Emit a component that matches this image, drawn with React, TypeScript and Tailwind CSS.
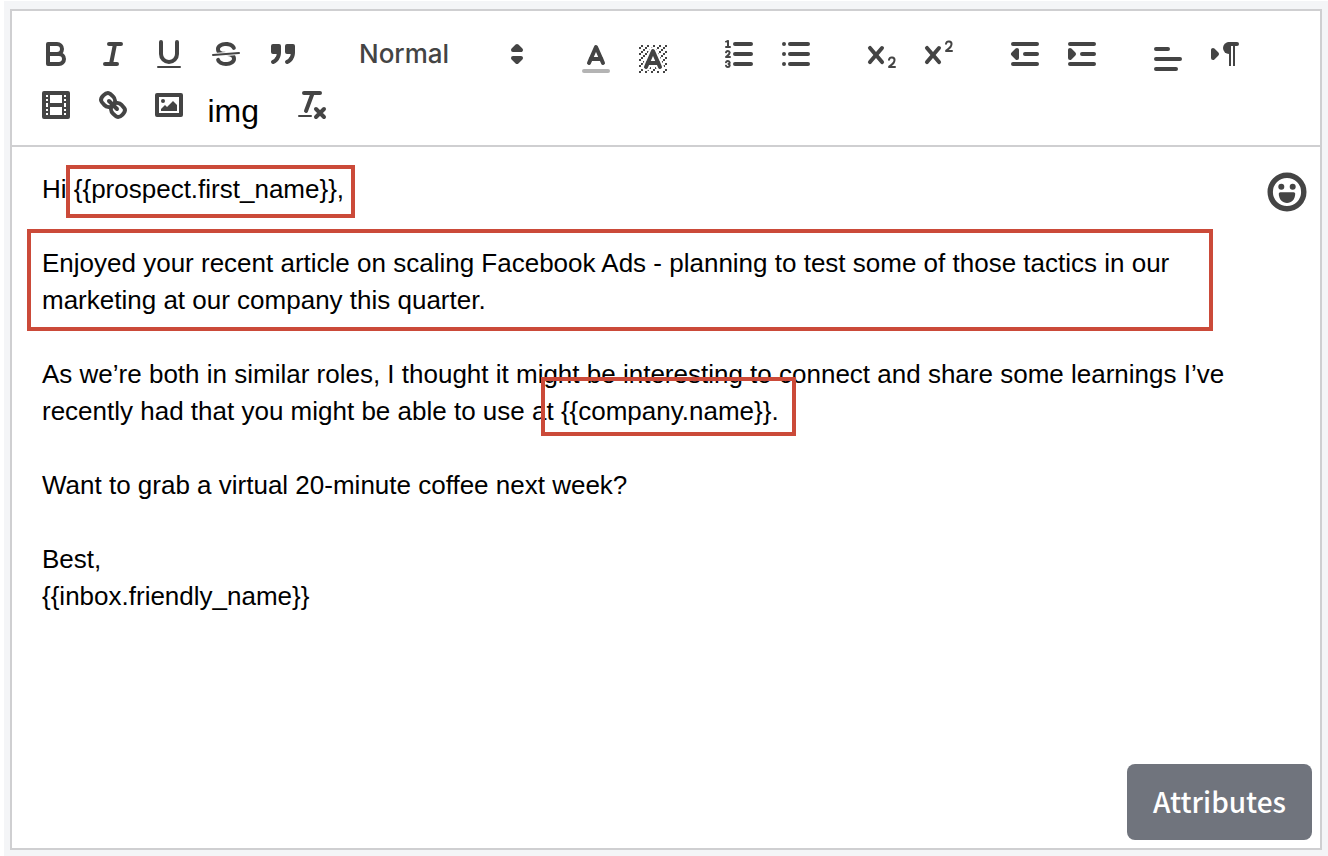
import type { ReactNode } from "react";

function Icon({ children }: { children: ReactNode }) {
  return (
    <svg
      viewBox="0 0 18 18"
      className="size-9 shrink-0"
      fill="none"
      stroke="#444"
      strokeWidth="2"
      strokeLinecap="round"
      strokeLinejoin="round"
      aria-hidden="true"
    >
      {children}
    </svg>
  );
}

function ToolButton({ label, low, children }: { label: string; low?: boolean; children: ReactNode }) {
  return (
    <button
      type="button"
      aria-label={label}
      className={low ? "flex h-9 items-center justify-center pt-[10px]" : "flex h-9 items-center justify-center"}
    >
      <Icon>{children}</Icon>
    </button>
  );
}

function Pair({ children }: { children: ReactNode }) {
  return <div className="grid w-[113px] grid-cols-2">{children}</div>;
}

const fill = { fill: "#444", stroke: "none" };

const hatchCells = [
  [4, 4], [2, 6], [3, 5], [4, 7], [2, 12], [2, 9], [2, 15], [3, 8], [12, 2], [11, 3], [2, 3], [6, 2], [3, 2],
  [5, 3], [9, 2], [15, 14], [13, 7], [15, 5], [14, 6], [15, 8], [14, 9], [14, 3], [15, 2], [12, 5], [13, 4],
  [9, 14], [8, 15], [5, 15], [11, 15], [14, 15], [15, 11],
];

const crossPath =
  "M9.65,5.241a1,1,0,0,0-1.409.108L6,7.964,3.759,5.349A1,1,0,0,0,2.192,6.59178Q2.21541,6.6213,2.241,6.649L4.684,9.5,2.241,12.35A1,1,0,0,0,3.71,13.70722q0.02557-.02768.049-0.05722L6,11.036,8.241,13.65a1,1,0,1,0,1.567-1.24277Q9.78459,12.3777,9.759,12.35L7.316,9.5,9.759,6.651A1,1,0,0,0,9.65,5.241Z";

function Toolbar() {
  return (
    <div
      role="toolbar"
      aria-label="Formatting"
      className="flex flex-wrap gap-x-[30px] gap-y-[15px] border-b-2 border-[#cfcfd1] px-4 pt-[25px] pb-[22px]"
    >
      <div className="grid w-[283px] grid-cols-5">
        <ToolButton label="Bold">
          <path d="M5,4H9.5A2.5,2.5,0,0,1,12,6.5v0A2.5,2.5,0,0,1,9.5,9H5V4Z" />
          <path d="M5,9h5.5A2.5,2.5,0,0,1,13,11.5v0A2.5,2.5,0,0,1,10.5,14H5V9Z" />
        </ToolButton>
        <ToolButton label="Italic">
          <path d="M7,4H13M5,14H11M8,14L10,4" />
        </ToolButton>
        <ToolButton label="Underline">
          <path d="M5,3V9a4.012,4.012,0,0,0,4,4H9a4.012,4.012,0,0,0,4-4V3" />
          <rect {...fill} height="1" rx="0.5" width="12" x="3" y="15" />
        </ToolButton>
        <ToolButton label="Strikethrough">
          <line strokeWidth="1" x1="15.5" x2="2.5" y1="8.5" y2="9.5" />
          <path
            {...fill}
            d="M9.007,8C6.542,7.791,6,7.519,6,6.5,6,5.792,7.283,5,9,5c1.571,0,2.765.679,2.969,1.309a1,1,0,0,0,1.9-.617C13.356,4.106,11.354,3,9,3,6.2,3,4,4.538,4,6.5a3.2,3.2,0,0,0,.5,1.843Z"
          />
          <path
            {...fill}
            d="M8.984,10C11.457,10.208,12,10.479,12,11.5c0,0.708-1.283,1.5-3,1.5-1.571,0-2.765-.679-2.969-1.309a1,1,0,1,0-1.9.617C4.644,13.894,6.646,15,9,15c2.8,0,5-1.538,5-3.5a3.2,3.2,0,0,0-.5-1.843Z"
          />
        </ToolButton>
        <ToolButton label="Blockquote">
          <rect fill="#444" height="3" width="3" x="4" y="5" />
          <rect fill="#444" height="3" width="3" x="11" y="5" />
          <path fill="#444" d="M7,8c0,4.031-3,5-3,5" />
          <path fill="#444" d="M14,8c0,4.031-3,5-3,5" />
        </ToolButton>
      </div>

      <div className="grid w-[197px] items-center">
        <select
          aria-label="Heading"
          className="col-start-1 row-start-1 h-9 w-full appearance-none pl-[18px] font-['Inter',sans-serif] text-[26px] leading-9 font-medium text-[#444]"
        >
          <option>Normal</option>
        </select>
        <div className="pointer-events-none col-start-1 row-start-1 flex justify-end pr-[3px]">
          <Icon>
            <polygon fill="#444" points="7 11 9 13 11 11 7 11" />
            <polygon fill="#444" points="7 7 9 5 11 7 7 7" />
          </Icon>
        </div>
      </div>

      <Pair>
        <ToolButton label="Text color" low>
          <line opacity="0.4" x1="3" x2="15" y1="15" y2="15" />
          <polyline points="5.5 11 9 3 12.5 11" />
          <line x1="11.63" x2="6.38" y1="9" y2="9" />
        </ToolButton>
        <ToolButton label="Background color" low>
          <g {...fill}>
            {hatchCells.map(([x, y]) => (
              <rect key={`${x}-${y}`} height="1" width="1" x={x} y={y} />
            ))}
            <polygon points="6 6.868 6 6 5 6 5 7 5.942 7 6 6.868" />
            <polygon points="6.817 5 6 5 6 6 6.38 6 6.817 5" />
            <polygon points="4 11.439 4 11 3 11 3 12 3.755 12 4 11.439" />
            <polygon points="4.63 10 4 10 4 11 4.192 11 4.63 10" />
            <path d="M10.832,4.2L11,4.582V4H10.708A1.948,1.948,0,0,1,10.832,4.2Z" />
            <path d="M7,4.582L7.168,4.2A1.929,1.929,0,0,1,7.292,4H7V4.582Z" />
            <path d="M8,13H7.683l-0.351.8a1.933,1.933,0,0,1-.124.2H8V13Z" />
            <path d="M9,3H8V3.282A1.985,1.985,0,0,1,9,3Z" />
            <polygon points="13.447 10.174 13.469 10.225 13.472 10.232 13.808 11 14 11 14 10 13.37 10 13.447 10.174" />
            <path d="M3.775,14H3v1H4V14.314A1.97,1.97,0,0,1,3.775,14Z" />
            <polygon points="12 6.868 12 6 11.62 6 12 6.868" />
            <polygon points="12.933 9 13 9 13 8 12.495 8 12.933 9" />
            <path d="M6,14.926V15H7V14.316A1.993,1.993,0,0,1,6,14.926Z" />
            <path d="M10.668,13.8L10.317,13H10v1h0.792A1.947,1.947,0,0,1,10.668,13.8Z" />
            <path d="M14.332,12.2a1.99,1.99,0,0,1,.166.8H15V12H14.245Z" />
          </g>
          <polyline points="5.5 13 9 5 12.5 13" />
          <line x1="11.63" x2="6.38" y1="11" y2="11" />
        </ToolButton>
      </Pair>

      <Pair>
        <ToolButton label="Numbered list">
          <path d="M7,4H15M7,9H15M7,14H15" />
          <line strokeWidth="1" x1="2.5" x2="4.5" y1="5.5" y2="5.5" />
          <path
            {...fill}
            d="M3.5,6A0.5,0.5,0,0,1,3,5.5V3.085l-0.276.138A0.5,0.5,0,0,1,2.053,3c-0.124-.247-0.023-0.324.224-0.447l1-.5A0.5,0.5,0,0,1,4,2.5v3A0.5,0.5,0,0,1,3.5,6Z"
          />
          <path strokeWidth="1" d="M4.5,10.5h-2c0-.234,1.85-1.076,1.85-2.234A0.959,0.959,0,0,0,2.5,8.156" />
          <path
            strokeWidth="1"
            d="M2.5,14.846a0.959,0.959,0,0,0,1.85-.109A0.7,0.7,0,0,0,3.75,14a0.688,0.688,0,0,0,.6-0.736,0.959,0.959,0,0,0-1.85-.109"
          />
        </ToolButton>
        <ToolButton label="Bulleted list">
          <path d="M6,4H15M6,9H15M6,14H15M3,4H3M3,9H3M3,14H3" />
        </ToolButton>
      </Pair>

      <Pair>
        <ToolButton label="Subscript">
          <path
            {...fill}
            d="M15.5,15H13.861a3.858,3.858,0,0,0,1.914-2.975,1.8,1.8,0,0,0-1.6-1.751A1.921,1.921,0,0,0,12.021,11.7a0.50013,0.50013,0,1,0,.957.291h0a0.914,0.914,0,0,1,1.053-.725,0.81,0.81,0,0,1,.744.762c0,1.076-1.16971,1.86982-1.93971,2.43082A1.45639,1.45639,0,0,0,12,15.5a0.5,0.5,0,0,0,.5.5h3A0.5,0.5,0,0,0,15.5,15Z"
          />
          <path {...fill} d={crossPath} />
        </ToolButton>
        <ToolButton label="Superscript">
          <path
            {...fill}
            d="M15.5,7H13.861a4.015,4.015,0,0,0,1.914-2.975,1.8,1.8,0,0,0-1.6-1.751A1.922,1.922,0,0,0,12.021,3.7a0.5,0.5,0,1,0,.957.291,0.917,0.917,0,0,1,1.053-.725,0.81,0.81,0,0,1,.744.762c0,1.077-1.164,1.925-1.934,2.486A1.423,1.423,0,0,0,12,7.5a0.5,0.5,0,0,0,.5.5h3A0.5,0.5,0,0,0,15.5,7Z"
          />
          <path {...fill} d={crossPath} />
        </ToolButton>
      </Pair>

      <Pair>
        <ToolButton label="Decrease indent">
          <path d="M3,14H15M3,4H15M9,9H15" />
          <polygon fill="#444" points="5 7 5 11 3 9" />
        </ToolButton>
        <ToolButton label="Increase indent">
          <path d="M3,14H15M3,4H15M9,9H15" />
          <polygon fill="#444" points="3 7 3 11 5 9" />
        </ToolButton>
      </Pair>

      <Pair>
        <ToolButton label="Alignment" low>
          <path d="M3,9H15M3,14H13M3,4H9" />
        </ToolButton>
        <ToolButton label="Text direction">
          <polygon fill="#444" points="3 11 5 9 3 7" />
          <line x1="15" x2="11" y1="4" y2="4" />
          <path {...fill} d="M11,3a3,3,0,0,0,0,6h1V3H11Z" />
          <rect {...fill} height="11" width="1" x="11" y="4" />
          <rect {...fill} height="11" width="1" x="13" y="4" />
        </ToolButton>
      </Pair>

      <div className="grid w-[226px] grid-cols-4">
        <ToolButton label="Video">
          <rect height="12" width="12" x="3" y="3" />
          <path
            {...fill}
            d="M5,3h1v12h-1zM12,3h1v12h-1zM5,8h8v2h-8zM3,5h3v1h-3zM3,7h3v1h-3zM3,10h3v1h-3zM3,12h3v1h-3zM12,5h3v1h-3zM12,7h3v1h-3zM12,10h3v1h-3zM12,12h3v1h-3z"
          />
        </ToolButton>
        <ToolButton label="Link">
          <line x1="7" x2="11" y1="7" y2="11" />
          <path d="M8.9,4.577a3.476,3.476,0,0,1,.36,4.679A3.476,3.476,0,0,1,4.577,8.9C3.185,7.5,2.035,6.4,4.217,4.217S7.5,3.185,8.9,4.577Z" />
          <path d="M13.423,9.1a3.476,3.476,0,0,0-4.679-.36,3.476,3.476,0,0,0,.36,4.679c1.392,1.392,2.5,2.542,4.679.36S14.815,10.5,13.423,9.1Z" />
        </ToolButton>
        <ToolButton label="Image">
          <rect height="10" width="12" x="3" y="4" />
          <circle {...fill} cx="6" cy="7" r="1" />
          <polyline {...fill} points="5 12 5 11 7 9 8 10 11 7 13 9 13 12 5 12" />
        </ToolButton>
        <button
          type="button"
          className="h-9 pt-1.5 pl-[10px] text-left font-['Liberation_Sans',Arial,sans-serif] text-[32px] leading-9 text-black"
        >
          img
        </button>
      </div>

      <div className="grid w-14">
        <ToolButton label="Remove formatting">
          <path d="M5,3H13M6,12L9.35,3M11,11L15,15M15,11L11,15" />
          <rect {...fill} height="1" rx="0.5" width="7" x="2" y="14" />
        </ToolButton>
      </div>
    </div>
  );
}

export default function App() {
  return (
    <main className="flex min-h-screen flex-col border-t border-l-4 border-white bg-[#f4f5f7] pt-2 pr-1.5 pb-1.5 pl-1.5">
      <section className="flex grow flex-col border-2 border-[#cfcfd1] bg-white">
        <Toolbar />
        <div className="relative flex grow flex-col">
          <div
            role="textbox"
            aria-label="Message"
            aria-multiline="true"
            contentEditable
            suppressContentEditableWarning
            className="grow space-y-[37px] pt-6 pr-[50px] pb-24 pl-[30px] font-['Liberation_Sans',Arial,sans-serif] text-[26px] leading-[37px] text-black outline-none"
          >
            <p>{"Hi {{prospect.first_name}},"}</p>
            <p>
              Enjoyed your recent article on scaling Facebook Ads - planning to test some of those tactics in our
              marketing at our company this quarter.
            </p>
            <p>
              {
                "As we’re both in similar roles, I thought it might be interesting to connect and share some learnings I’ve recently had that you might be able to use at {{company.name}}."
              }
            </p>
            <p>Want to grab a virtual 20-minute coffee next week?</p>
            <p>
              Best,
              <br />
              {"{{inbox.friendly_name}}"}
            </p>
          </div>

          <div className="pointer-events-none absolute top-[18px] left-[54px] h-[53px] w-[289px] border-4 border-[#cb4a39]" />
          <div className="pointer-events-none absolute top-[82px] left-[15px] h-[102px] w-[1186px] border-4 border-[#cb4a39]" />
          <div className="pointer-events-none absolute top-[230px] left-[529px] h-[59px] w-[255px] border-4 border-[#cb4a39]" />

          <button type="button" aria-label="Insert emoji" className="absolute top-[25px] right-[13px]">
            <svg viewBox="0 0 40 40" className="size-10" aria-hidden="true">
              <circle cx="20" cy="20" r="16.8" fill="none" stroke="#444" strokeWidth="5.4" />
              <circle cx="14.3" cy="14.8" r="3" fill="#444" />
              <circle cx="25.7" cy="14.8" r="3" fill="#444" />
              <path
                d="M13.3,20.3H26.7Q28.2,20.3,28.2,21.8C28.2,27.5,24.5,31,20,31S11.8,27.5,11.8,21.8Q11.8,20.3,13.3,20.3Z"
                fill="#444"
              />
            </svg>
          </button>

          <button
            type="button"
            className="absolute right-2 bottom-2 h-[76px] rounded-lg bg-[#70747d] px-[26px] pb-0.5 font-['Noto_Sans_CJK_SC',sans-serif] text-[28px] font-medium text-white"
          >
            Attributes
          </button>
        </div>
      </section>
    </main>
  );
}
